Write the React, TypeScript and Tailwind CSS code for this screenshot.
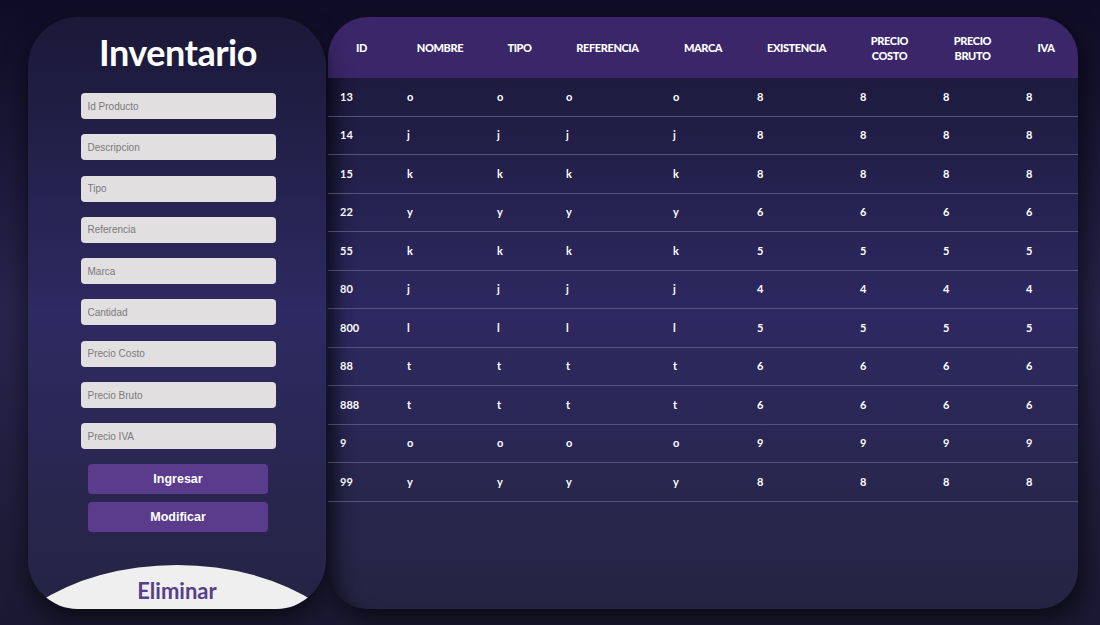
import React from "react";

const fields = [
  "Id Producto",
  "Descripcion",
  "Tipo",
  "Referencia",
  "Marca",
  "Cantidad",
  "Precio Costo",
  "Precio Bruto",
  "Precio IVA",
];

const headers = [
  "ID",
  "NOMBRE",
  "TIPO",
  "REFERENCIA",
  "MARCA",
  "EXISTENCIA",
  "PRECIO COSTO",
  "PRECIO BRUTO",
  "IVA",
];

const rows: [string, string, string][] = [
  ["13", "o", "8"],
  ["14", "j", "8"],
  ["15", "k", "8"],
  ["22", "y", "6"],
  ["55", "k", "5"],
  ["80", "j", "4"],
  ["800", "l", "5"],
  ["88", "t", "6"],
  ["888", "t", "6"],
  ["9", "o", "9"],
  ["99", "y", "8"],
];

const cols = "grid grid-cols-[67px_90px_69px_107px_84px_103px_83px_83px_64px]";

function Formulario() {
  return (
    <div className="relative flex flex-col items-center w-[298px] h-[592px] shrink-0 rounded-[50px] overflow-hidden bg-linear-to-b from-[#1b1838] via-[#2e2a62] to-[#252343] shadow-[0_10px_25px_rgba(0,0,0,0.6)]">
      <h1 className="mt-[15px] pl-[2px] text-[36px] leading-[40px] font-bold tracking-[-0.5px] text-white">
        Inventario
      </h1>
      <div className="mt-[21px] pl-[2px] flex flex-col gap-[15.3px]">
        {fields.map((f) => (
          <input
            key={f}
            placeholder={f}
            className="w-[195px] h-[26px] rounded-[4px] bg-[#e1dfe0] px-[7px] text-[10px] text-[#333] placeholder:text-[#7a7a7a] font-['Liberation_Sans',Arial,sans-serif] outline-none"
          />
        ))}
      </div>
      <div className="mt-[15px] pl-[2px] flex flex-col gap-[8px]">
        <button className="w-[180px] h-[30px] rounded-[4px] bg-[#5a3b8c] text-white text-[12.5px] font-bold font-['Liberation_Sans',Arial,sans-serif]">
          Ingresar
        </button>
        <button className="w-[180px] h-[30px] rounded-[4px] bg-[#5a3b8c] text-white text-[12.5px] font-bold font-['Liberation_Sans',Arial,sans-serif]">
          Modificar
        </button>
      </div>
      <div className="mt-auto -mb-[222px] shrink-0 w-[400px] h-[266px] rounded-[50%] bg-[#efeff0] flex justify-center pt-[12px]">
        <span className="text-[22px] leading-[28px] font-bold text-[#583e8a]">Eliminar</span>
      </div>
    </div>
  );
}

function Tabla() {
  return (
    <div className="flex flex-col w-[750px] h-[592px] shrink-0 rounded-[40px] overflow-hidden bg-linear-to-b from-[#1a1736] via-[#2d2961] to-[#262442] shadow-[6px_10px_25px_rgba(0,0,0,0.6),inset_22px_0_18px_-14px_rgba(0,0,0,0.45)]">
      <div className={`${cols} h-[61px] bg-[#3b2669] items-center`}>
        {headers.map((h) => (
          <div
            key={h}
            className="text-center text-white text-[11px] leading-[15px] font-black tracking-[-0.4px] px-[18px]"
          >
            {h}
          </div>
        ))}
      </div>
      {rows.map(([id, c, n]) => (
        <div
          key={id}
          className={`${cols} h-[38.5px] items-center border-b border-[#58537a] text-white text-[11px] font-bold`}
        >
          <div className="pl-3">{id}</div>
          <div className="pl-3">{c}</div>
          <div className="pl-3">{c}</div>
          <div className="pl-3">{c}</div>
          <div className="pl-3">{c}</div>
          <div className="pl-3">{n}</div>
          <div className="pl-3">{n}</div>
          <div className="pl-3">{n}</div>
          <div className="pl-3">{n}</div>
        </div>
      ))}
    </div>
  );
}

export default function App() {
  return (
    <div className="w-[1100px] h-[625px] overflow-hidden flex gap-[2px] pl-[28px] pt-[17px] bg-linear-to-b from-[#0f0c25] via-[#29244d] to-[#1b1932] font-['Lato','Open_Sans',sans-serif]">
      <Formulario />
      <Tabla />
    </div>
  );
}
